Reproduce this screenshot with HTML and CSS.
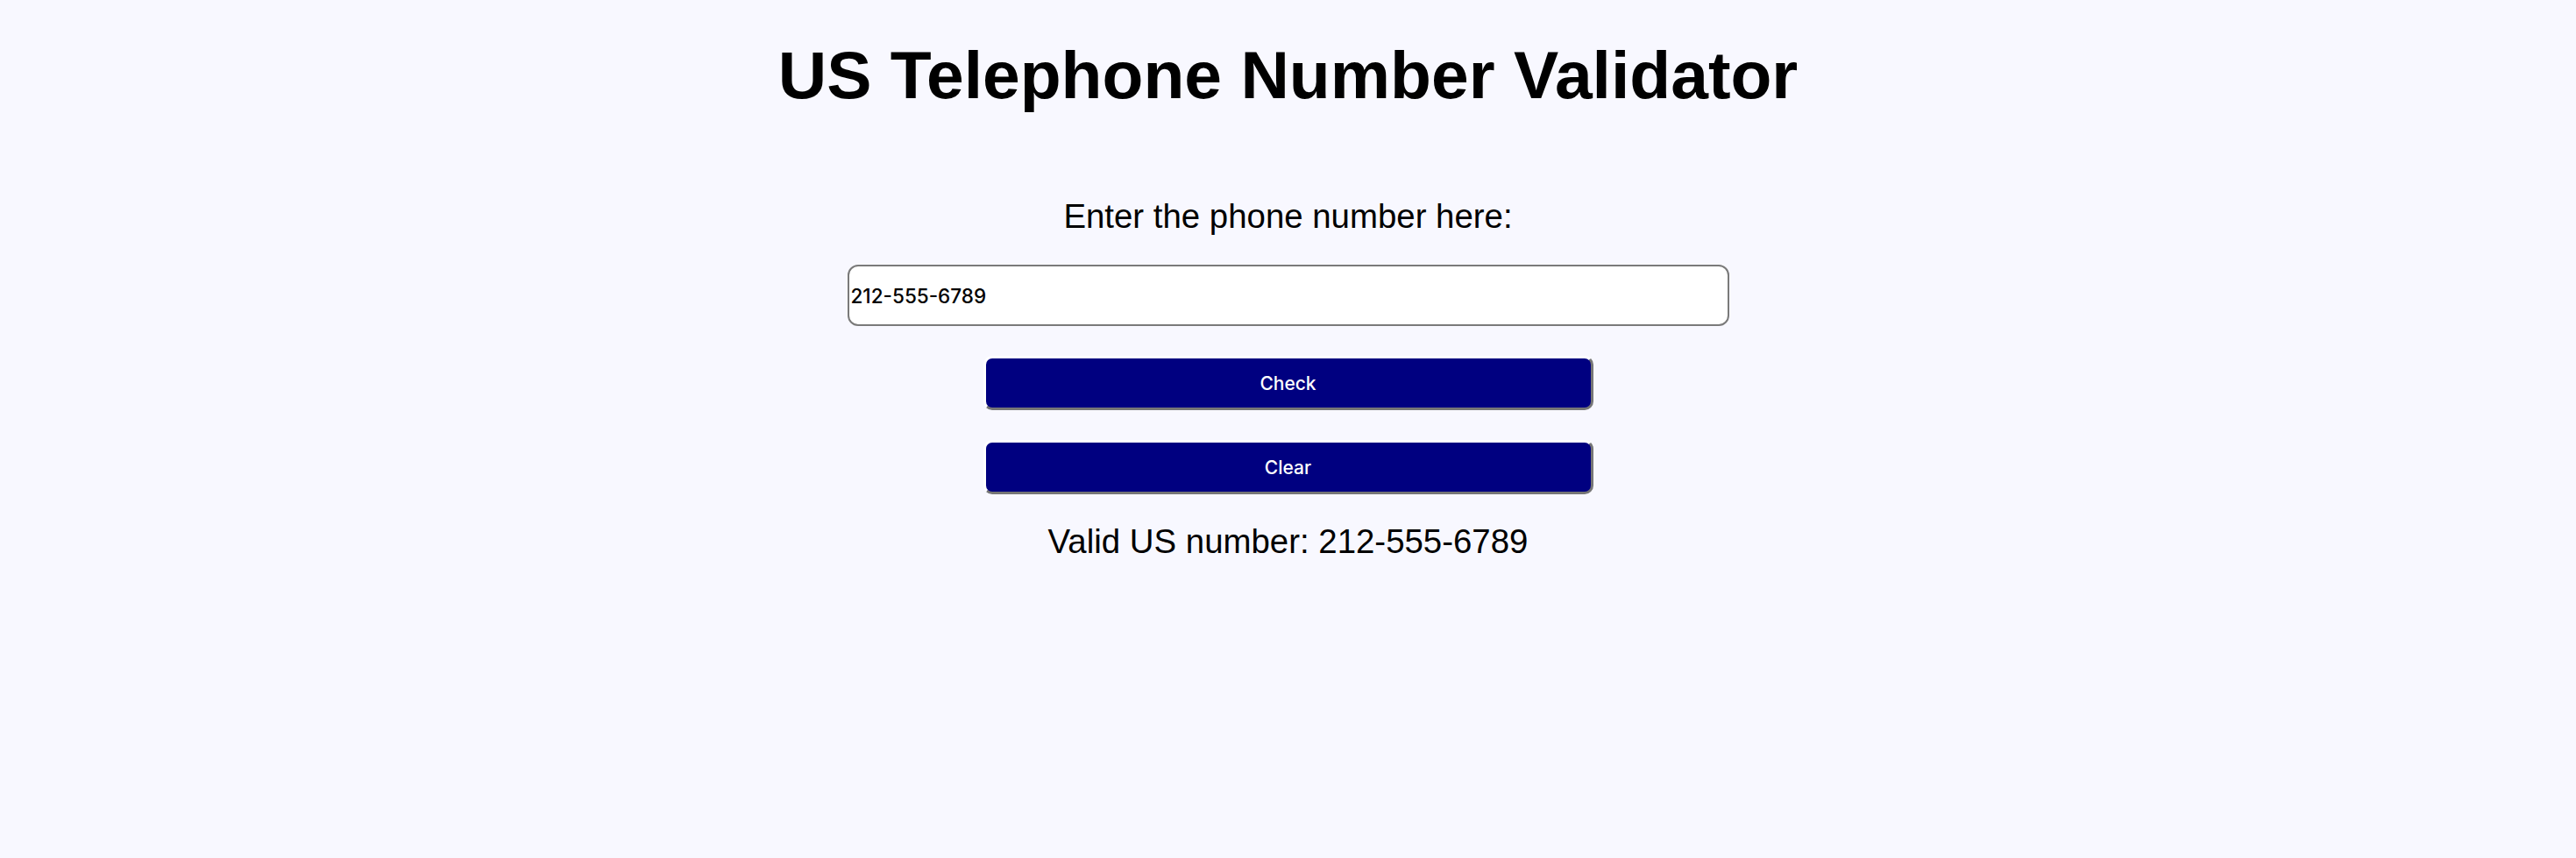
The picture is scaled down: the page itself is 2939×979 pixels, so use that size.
FILE: index.html
```html
<!DOCTYPE html>
<html lang="en">
<head>
<meta charset="utf-8">
<title>US Telephone Number Validator</title>
<link rel="stylesheet" href="styles.css">
</head>
<body>
<main class="app">
  <h1 class="title">US Telephone Number Validator</h1>
  <label class="prompt" for="user-input">Enter the phone number here:</label>
  <input class="phone-input" id="user-input" type="text" value="212-555-6789">
  <button class="btn" id="check-btn" type="button">Check</button>
  <button class="btn" id="clear-btn" type="button">Clear</button>
  <div class="results" id="results-div">Valid US number: 212-555-6789</div>
</main>
</body>
</html>
```
FILE: styles.css
```css
html, body {
  margin: 0;
  padding: 0;
  background: #f8f8ff;
}

body {
  font-family: "Liberation Sans", Arial, sans-serif;
  color: #000;
}

.app {
  display: flex;
  flex-direction: column;
  align-items: center;
  padding-top: 47px;
}

.title {
  margin: 0;
  font-size: 76.8px;
  line-height: 1;
  font-weight: bold;
}

.prompt {
  margin-top: 104px;
  font-size: 38.4px;
  line-height: 1;
}

.phone-input {
  box-sizing: border-box;
  margin-top: 36px;
  width: 1006px;
  height: 70px;
  padding: 1px 2px;
  border: 2px solid #7a7a7a;
  border-radius: 12px;
  background: #fff;
  font-family: Inter, "Noto Sans", sans-serif;
  font-size: 22.5px;
  font-weight: 500;
  color: #000;
  outline: none;
}

.btn {
  box-sizing: border-box;
  width: 696px;
  height: 62px;
  margin-top: 34px;
  padding: 0;
  border: 3px solid;
  border-color: #ffffff #767676 #767676 #ffffff;
  border-radius: 10px;
  background: #000080;
  color: #fff;
  font-family: Inter, "Noto Sans", sans-serif;
  font-size: 21px;
  font-weight: 500;
}

.results {
  margin-top: 35px;
  font-size: 38.4px;
  line-height: 1;
}
```
